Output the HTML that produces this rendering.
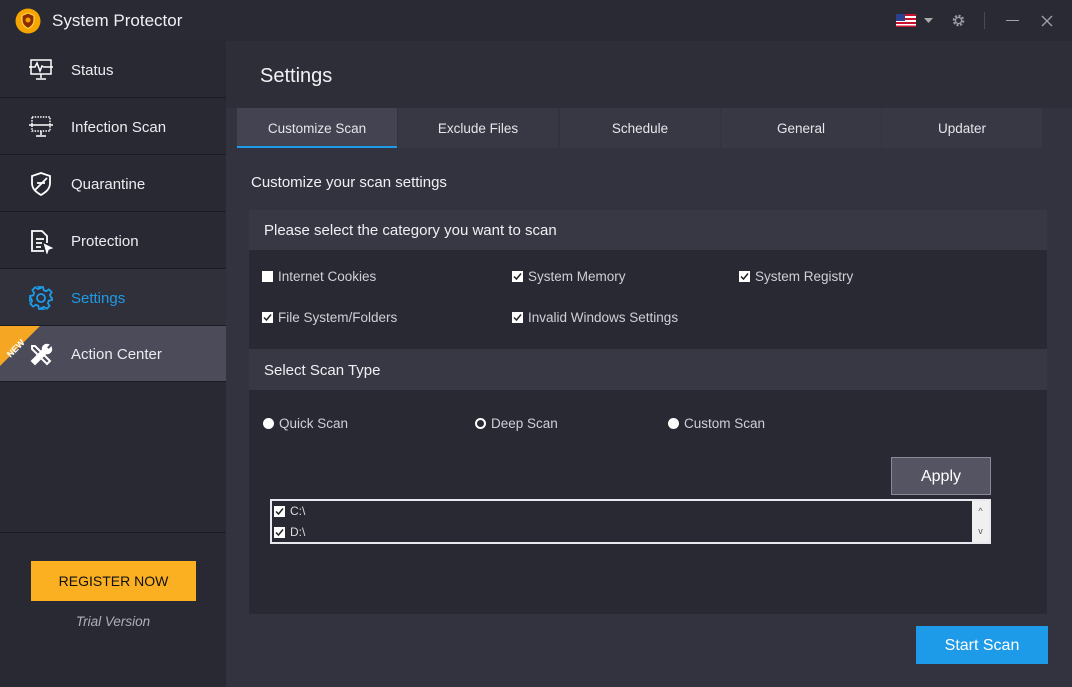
<!DOCTYPE html>
<html><head><style>
*{margin:0;padding:0;box-sizing:border-box}
body{width:1072px;height:687px;background:#33333f;font-family:"Liberation Sans",sans-serif;color:#e6e6ea;position:relative;overflow:hidden;font-size:14px}
.abs{position:absolute}
.title{left:0;top:0;width:1072px;height:41px;background:#2a2a35}
.side{left:0;top:41px;width:226px;height:646px;background:#292934}
.item{position:absolute;left:0;width:226px;height:57px;border-bottom:1px solid #1a1a22;display:flex;align-items:center;padding-left:71px;padding-top:2px;font-size:15px;color:#ececf0}
.ic{position:absolute;left:28px;top:16px;width:26px;height:26px}
.tab{position:absolute;top:108px;height:40px;background:#383844;display:flex;align-items:center;justify-content:center;font-size:13.5px;color:#e6e6ea}
.cb{position:absolute;width:11px;height:11px;background:#fff}
.cb svg{position:absolute;left:1px;top:1px}
.lbl{position:absolute;font-size:13.5px;color:#cfcfd6}
.rd{position:absolute;width:11px;height:11px;border-radius:50%;background:#fff}
</style></head><body>
<div class="abs title"></div>
<svg class="abs" style="left:15px;top:8px" width="26" height="26" viewBox="0 0 26 26"><circle cx="13" cy="13" r="12.5" fill="#f6a400"/><path d="M13 5l6 2.5v5c0 4-3 6.5-6 8-3-1.5-6-4-6-8v-5z" fill="#8b2b00" stroke="#ffd34d" stroke-width="1.2"/><circle cx="13" cy="12" r="2.5" fill="#f6a400"/></svg>
<div class="abs" style="left:52px;top:11px;font-size:17px;color:#f0f0f4">System Protector</div>
<svg class="abs" style="left:896px;top:14px" width="20" height="13"><rect width="20" height="13" fill="#fff"/><g fill="#c8102e"><rect y="0" width="20" height="2"/><rect y="4" width="20" height="2"/><rect y="8" width="20" height="2"/><rect y="11.5" width="20" height="1.5"/></g><rect width="9" height="7" fill="#2d3f8f"/></svg>
<svg class="abs" style="left:924px;top:18px" width="9" height="5"><path d="M0 0h9L4.5 5z" fill="#aaa"/></svg>
<svg class="abs" style="left:951px;top:13px" width="15" height="15" viewBox="0 0 16 16"><circle cx="8" cy="8" r="5" fill="none" stroke="#9a9aa3" stroke-width="2.4" stroke-dasharray="2.2 1.7"/><circle cx="8" cy="8" r="3.3" fill="none" stroke="#9a9aa3" stroke-width="1.5"/></svg>
<div class="abs" style="left:984px;top:12px;width:1px;height:17px;background:#4a4a55"></div>
<div class="abs" style="left:1006px;top:20px;width:13px;height:1px;background:#a0a0a8"></div>
<svg class="abs" style="left:1041px;top:15px" width="12" height="12"><path d="M1 1l10 10M11 1L1 11" stroke="#a0a0a8" stroke-width="1.3"/></svg>

<div class="abs side"></div>
<div class="item" style="top:41px">Status<svg class="ic" viewBox="0 0 26 26" fill="none" stroke="#fff" stroke-width="1.5"><rect x="3" y="3" width="20" height="14"/><path d="M1 10h6l2-4 3 8 2-5 2 1h9M13 17v4M8 22h10"/></svg></div>
<div class="item" style="top:98px">Infection Scan<svg class="ic" viewBox="0 0 26 26" fill="none" stroke="#fff" stroke-width="1.5"><rect x="4" y="3" width="18" height="14" stroke-dasharray="1.5 1.2"/><path d="M1 11h24M13 17v4M8 22h10"/></svg></div>
<div class="item" style="top:155px">Quarantine<svg class="ic" viewBox="0 0 26 26" fill="none" stroke="#fff" stroke-width="1.8"><path d="M13 2l9 3v7c0 6-4 9-9 12-5-3-9-6-9-12V5z"/><path d="M7 19L19 7M9 12h8"/></svg></div>
<div class="item" style="top:212px">Protection<svg class="ic" viewBox="0 0 26 26" fill="none" stroke="#fff" stroke-width="1.8"><path d="M16 23H4V3h10l5 5v7"/><path d="M8 11h8M8 15h6M8 19h5"/><path d="M17 17l6 3-3 1-1 3z" fill="#fff"/></svg></div>
<div class="item" style="top:269px;background:#30303b;color:#1e9be8">Settings<svg class="ic" viewBox="0 0 26 26" fill="none" stroke="#1e9be8" stroke-width="1.8"><circle cx="13" cy="13" r="4"/><path d="M11 2h4l.7 3.2 2.4 1 2.8-1.8 2.8 2.8-1.8 2.8 1 2.4L24 13v0l0 2-3.2.7-1 2.4 1.8 2.8-2.8 2.8-2.8-1.8-2.4 1L15 24h-4l-.7-3.2-2.4-1-2.8 1.8-2.8-2.8 1.8-2.8-1-2.4L2 15v-4l3.2-.7 1-2.4-1.8-2.8 2.8-2.8 2.8 1.8 2.4-1z"/></svg></div>
<div class="item" style="top:326px;background:#4b4b5a;height:56px">Action Center<svg class="ic" viewBox="0 0 26 26" fill="none" stroke="#fff" stroke-width="2"><path d="M4 4l3 0 12 12 3 3-3 3-3-3L4 7z"/><path d="M20 3a4 4 0 00-5 5L4 19l3 3 11-11a4 4 0 005-5l-2 2-2-1-1-2z" fill="#fff"/></svg></div>
<svg class="abs" style="left:0;top:326px" width="40" height="40"><path d="M0 0h40L0 40z" fill="#f5a623"/><text x="3" y="26" transform="rotate(-45 14 20)" font-family="Liberation Sans" font-weight="bold" font-size="9" fill="#fff">NEW</text></svg>
<div class="abs" style="left:0;top:532px;width:226px;height:1px;background:#1a1a22"></div>
<div class="abs" style="left:31px;top:561px;width:165px;height:40px;background:#fbb022;color:#111;font-size:14px;display:flex;align-items:center;justify-content:center">REGISTER NOW</div>
<div class="abs" style="left:0;top:614px;width:226px;text-align:center;font-style:italic;color:#b0b0b8;font-size:13.5px">Trial Version</div>

<div class="abs" style="left:226px;top:41px;width:846px;height:67px;background:#2e2e39"></div>
<div class="abs" style="left:260px;top:65px;font-size:20px;color:#f2f2f5">Settings</div>
<div class="tab" style="left:237px;width:160px;background:#434351;border-bottom:2px solid #1e9be8;padding-top:2px">Customize Scan</div>
<div class="tab" style="left:398px;width:160px">Exclude Files</div>
<div class="tab" style="left:560px;width:160px">Schedule</div>
<div class="tab" style="left:721px;width:160px">General</div>
<div class="tab" style="left:882px;width:160px">Updater</div>
<div class="abs" style="left:251px;top:174px;font-size:15px;color:#f0f0f4">Customize your scan settings</div>

<div class="abs" style="left:249px;top:210px;width:798px;height:404px;background:#292933"></div>
<div class="abs" style="left:249px;top:210px;width:798px;height:40px;background:#383844"></div>
<div class="abs" style="left:264px;top:222px;font-size:15px;color:#f0f0f4">Please select the category you want to scan</div>
<div class="abs" style="left:249px;top:349px;width:798px;height:41px;background:#383844"></div>
<div class="abs" style="left:264px;top:362px;font-size:15px;color:#f0f0f4">Select Scan Type</div>

<div class="cb" style="left:262px;top:271px"></div><div class="lbl" style="left:278px;top:269px">Internet Cookies</div>
<div class="cb" style="left:512px;top:271px"><svg width="9" height="9"><path d="M1 4.5l2.5 2.5L8 1.5" stroke="#222" stroke-width="1.5" fill="none"/></svg></div><div class="lbl" style="left:528px;top:269px">System Memory</div>
<div class="cb" style="left:739px;top:271px"><svg width="9" height="9"><path d="M1 4.5l2.5 2.5L8 1.5" stroke="#222" stroke-width="1.5" fill="none"/></svg></div><div class="lbl" style="left:755px;top:269px">System Registry</div>
<div class="cb" style="left:262px;top:312px"><svg width="9" height="9"><path d="M1 4.5l2.5 2.5L8 1.5" stroke="#222" stroke-width="1.5" fill="none"/></svg></div><div class="lbl" style="left:278px;top:310px">File System/Folders</div>
<div class="cb" style="left:512px;top:312px"><svg width="9" height="9"><path d="M1 4.5l2.5 2.5L8 1.5" stroke="#222" stroke-width="1.5" fill="none"/></svg></div><div class="lbl" style="left:528px;top:310px">Invalid Windows Settings</div>

<div class="rd" style="left:263px;top:418px"></div><div class="lbl" style="left:279px;top:416px">Quick Scan</div>
<div class="rd" style="left:475px;top:418px;border:2.5px solid #fff;background:#292933"></div><div class="lbl" style="left:491px;top:416px">Deep Scan</div>
<div class="rd" style="left:668px;top:418px"></div><div class="lbl" style="left:684px;top:416px">Custom Scan</div>

<div class="abs" style="left:891px;top:457px;width:100px;height:38px;background:#545462;border:1px solid #8a8a96;display:flex;align-items:center;justify-content:center;font-size:16px;color:#fff;padding-top:1px">Apply</div>
<div class="abs" style="left:270px;top:499px;width:721px;height:45px;border:2px solid #e8e8ee;background:#292933"></div>
<div class="abs" style="left:972px;top:501px;width:17px;height:41px;background:#f0f0f0;font-size:9px;color:#555;text-align:center;line-height:20px">^<br>v</div>
<div class="cb" style="left:274px;top:506px"><svg width="9" height="9"><path d="M1 4.5l2.5 2.5L8 1.5" stroke="#222" stroke-width="1.5" fill="none"/></svg></div><div class="lbl" style="left:290px;top:504px;font-size:12px;color:#ddd">C:\</div>
<div class="cb" style="left:274px;top:527px"><svg width="9" height="9"><path d="M1 4.5l2.5 2.5L8 1.5" stroke="#222" stroke-width="1.5" fill="none"/></svg></div><div class="lbl" style="left:290px;top:525px;font-size:12px;color:#ddd">D:\</div>

<div class="abs" style="left:916px;top:626px;width:132px;height:38px;background:#1e9be8;display:flex;align-items:center;justify-content:center;font-size:16px;color:#fff;padding-top:1px">Start Scan</div>
</body></html>
